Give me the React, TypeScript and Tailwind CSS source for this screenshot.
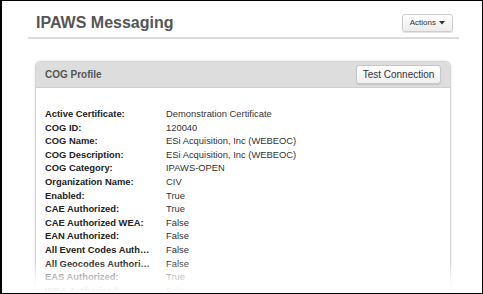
import React from "react";

const rows: [string, string][] = [
  ["Active Certificate:", "Demonstration Certificate"],
  ["COG ID:", "120040"],
  ["COG Name:", "ESi Acquisition, Inc (WEBEOC)"],
  ["COG Description:", "ESi Acquisition, Inc (WEBEOC)"],
  ["COG Category:", "IPAWS-OPEN"],
  ["Organization Name:", "CIV"],
  ["Enabled:", "True"],
  ["CAE Authorized:", "True"],
  ["CAE Authorized WEA:", "False"],
  ["EAN Authorized:", "False"],
  ["All Event Codes Authorized:", "False"],
  ["All Geocodes Authorized:", "False"],
  ["EAS Authorized:", "True"],
  ["WEA Authorized:", "False"],
  ["NWEM Authorized:", "False"],
];

export default function App() {
  return (
    <div className="relative w-[483px] h-[294px] overflow-hidden bg-white border border-black border-l-2 font-['Liberation_Sans',Arial,sans-serif]">
      {/* Page header */}
      <div className="ml-[26px] w-[431px] pt-[12px] pb-[4px] border-b-2 border-[#dcdcdc]">
        <div className="flex items-center justify-between h-[20px] pl-[8px] pr-[6px]">
          <h1 className="text-[16px] leading-[20px] font-bold text-[#555555]">IPAWS Messaging</h1>
          <button className="flex items-center gap-[3px] h-[18px] px-[7px] rounded-[3px] border border-[#cccccc] bg-linear-to-b from-white to-[#ececec] shadow-[0_1px_1px_rgba(0,0,0,0.12)] text-[8px] text-[#333333]">
            Actions
            <svg width="6" height="4" viewBox="0 0 6 4"><path d="M0 0h6L3 3.5z" fill="#333" /></svg>
          </button>
        </div>
      </div>

      {/* Panel */}
      <div className="ml-[33px] mt-[22px] w-[416px] rounded-t-[5px] border border-[#d6d6d6] shadow-[0_0_3px_rgba(0,0,0,0.12)]">
        <div className="flex items-center justify-between h-[26px] pl-[9px] pr-[9px] bg-[#dddddd] rounded-t-[4px] border-b border-[#cfcfcf]">
          <span className="text-[10px] font-bold text-[#555555]">COG Profile</span>
          <button className="h-[19px] w-[85px] rounded-[3px] border border-[#c8c8c8] bg-linear-to-b from-white to-[#efefef] shadow-[0_1px_1px_rgba(0,0,0,0.12)] text-[10px] text-[#333333]">
            Test Connection
          </button>
        </div>
        <div className="pt-[19px] pl-[9px] pb-[10px] bg-white">
          {rows.map(([k, v]) => (
            <div key={k} className="flex h-[13.6px] items-center text-[9.4px] leading-[13.6px]">
              <div className="w-[107px] mr-[14px] truncate font-bold text-[#222222]">{k}</div>
              <div className="text-[#333333]">{v}</div>
            </div>
          ))}
        </div>
      </div>

      {/* bottom fade */}
      <div className="pointer-events-none absolute left-0 right-0 bottom-0 h-[32px] bg-linear-to-b from-white/0 via-white/70 to-white" />
    </div>
  );
}
